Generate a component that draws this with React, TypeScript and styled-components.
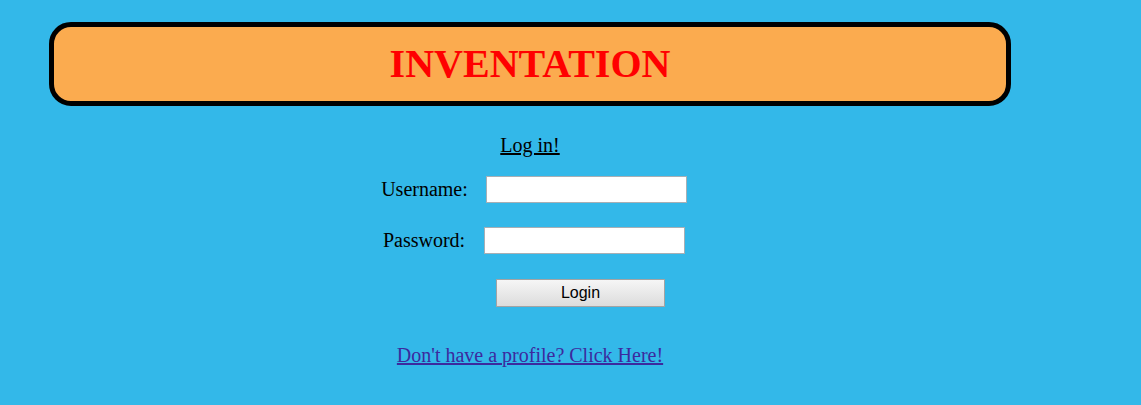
import React from "react";
import styled, { createGlobalStyle } from "styled-components";

const GlobalStyle = createGlobalStyle`
  html, body {
    margin: 0;
    padding: 0;
    background-color: #33b8e9;
  }
  body {
    font-family: "Liberation Serif", "Times New Roman", serif;
    min-height: 405px;
  }
`;

const Page = styled.div`
  padding: 22px 0 0 49px;
`;

const Container = styled.div`
  width: 962px;
  display: flex;
  flex-direction: column;
  align-items: center;
`;

const Header = styled.header`
  box-sizing: border-box;
  width: 100%;
  height: 84px;
  border: 5px solid #000;
  border-radius: 22px;
  background-color: #fbab4f;
  display: flex;
  align-items: center;
  justify-content: center;
`;

const Title = styled.h1`
  margin: 0;
  font-family: "Liberation Serif", "Times New Roman", serif;
  font-weight: 700;
  font-size: 40px;
  line-height: 46px;
  color: #ff0000;
`;

const SubTitle = styled.a`
  margin-top: 28px;
  font-size: 20px;
  line-height: 23px;
  color: #000;
  text-decoration: underline;
`;

const Form = styled.form`
  margin-top: 18px;
  display: flex;
  flex-direction: column;
  align-items: center;
`;

const Row = styled.div<{ $gap: number; $shift: number; $space: number }>`
  display: flex;
  align-items: center;
  justify-content: center;
  gap: ${(p) => p.$gap}px;
  padding-left: ${(p) => p.$shift}px;
  height: 28px;
  margin-top: ${(p) => p.$space}px;
`;

const Label = styled.label`
  font-size: 20px;
  line-height: 23px;
  color: #000;
`;

const Input = styled.input`
  box-sizing: border-box;
  width: 201px;
  height: 27px;
  border: 1px solid #a7afb5;
  background: #fff;
  padding: 2px 4px;
  outline: none;
`;

const Button = styled.button`
  box-sizing: border-box;
  width: 169px;
  height: 28px;
  border: 1px solid #a3a3a3;
  background: linear-gradient(#f6f6f6, #dcdcdc);
  font-family: "Liberation Sans", Arial, sans-serif;
  font-size: 16px;
  color: #000;
  padding: 0;
`;

const SignUpLink = styled.a`
  margin-top: 37px;
  font-size: 20px;
  line-height: 23px;
  color: #3c2a9e;
  text-decoration: underline;
`;

export default function App() {
  return (
    <>
      <GlobalStyle />
      <Page>
        <Container>
          <Header>
            <Title>INVENTATION</Title>
          </Header>
          <SubTitle href="#">Log in!</SubTitle>
          <Form onSubmit={(e) => e.preventDefault()}>
            <Row $gap={18} $shift={8} $space={0}>
              <Label htmlFor="username">Username:</Label>
              <Input id="username" type="text" />
            </Row>
            <Row $gap={19} $shift={8} $space={23}>
              <Label htmlFor="password">Password:</Label>
              <Input id="password" type="password" />
            </Row>
            <Row $gap={0} $shift={101} $space={25}>
              <Button type="submit">Login</Button>
            </Row>
          </Form>
          <SignUpLink href="#">Don't have a profile? Click Here!</SignUpLink>
        </Container>
      </Page>
    </>
  );
}
